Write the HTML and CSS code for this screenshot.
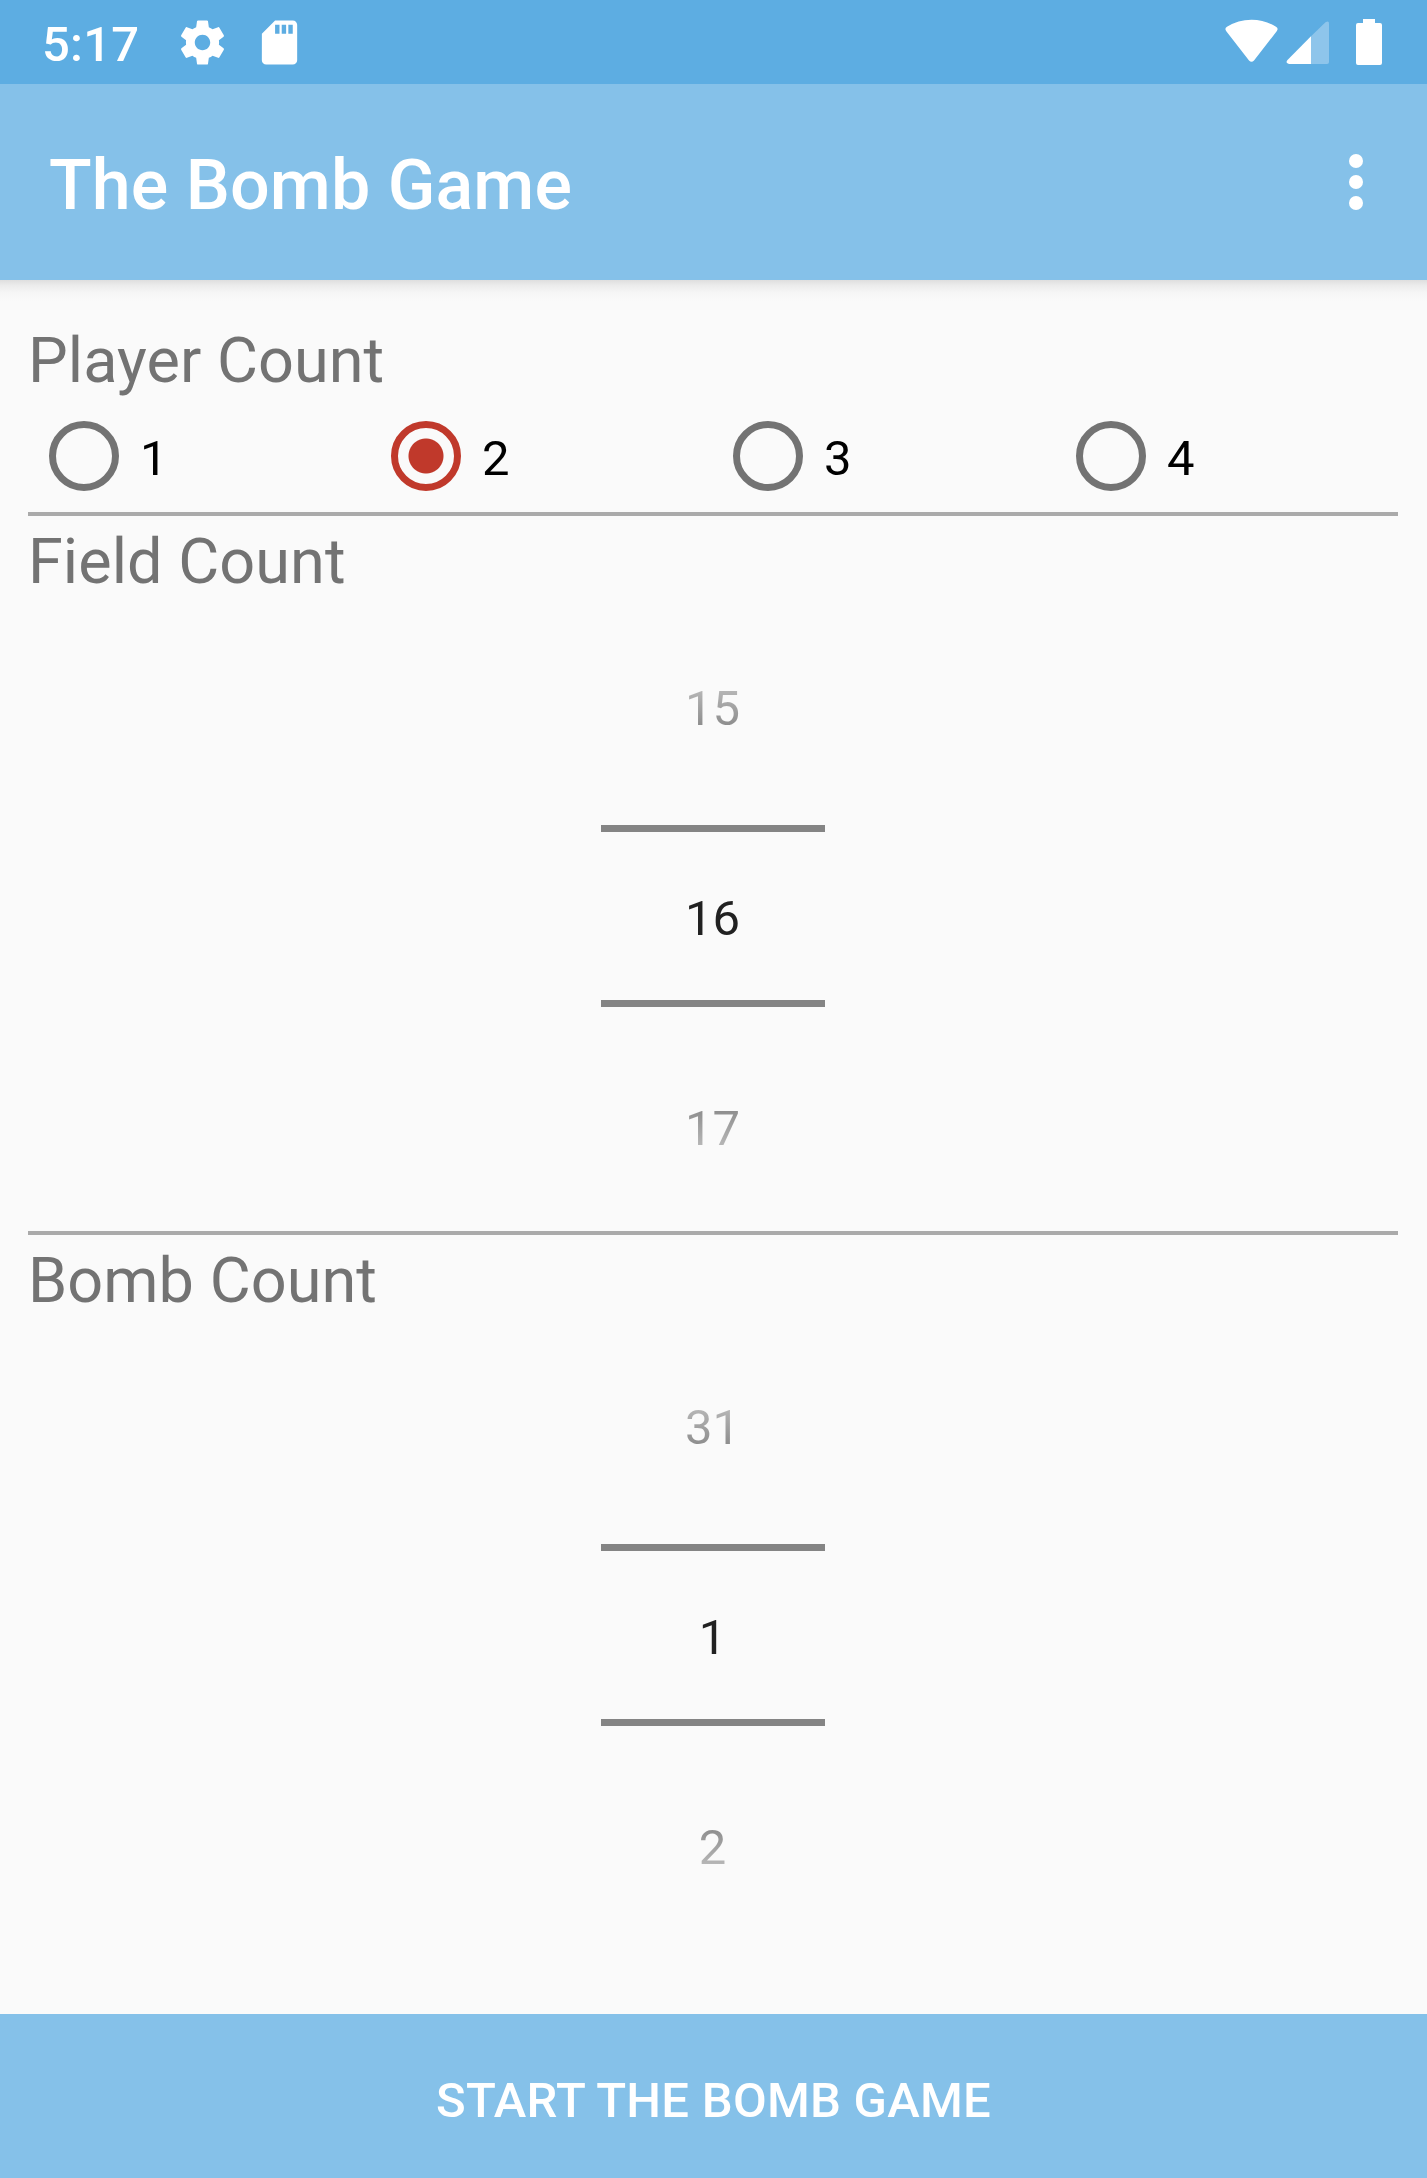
FILE: index.html
```html
<!DOCTYPE html>
<html lang="en">
<head>
<meta charset="utf-8">
<title>The Bomb Game</title>
<link rel="stylesheet" href="styles.css">
</head>
<body>
<div class="status-bar">
  <span class="clock">5:17</span>
  <svg class="gear" viewBox="0 0 24 24"><path d="M19.43 12.98c.04-.32.07-.64.07-.98s-.03-.66-.07-.98l2.11-1.65c.19-.15.24-.42.12-.64l-2-3.46c-.12-.22-.39-.3-.61-.22l-2.49 1c-.52-.4-1.08-.73-1.69-.98l-.38-2.65C14.46 2.18 14.25 2 14 2h-4c-.25 0-.46.18-.49.42l-.38 2.65c-.61.25-1.17.59-1.69.98l-2.49-1c-.23-.09-.49 0-.61.22l-2 3.46c-.13.22-.07.49.12.64l2.11 1.65c-.04.32-.07.65-.07.98s.03.66.07.98l-2.11 1.65c-.19.15-.24.42-.12.64l2 3.46c.12.22.39.3.61.22l2.49-1c.52.4 1.08.73 1.69.98l.38 2.65c.03.24.24.42.49.42h4c.25 0 .46-.18.49-.42l.38-2.65c.61-.25 1.17-.59 1.69-.98l2.49 1c.23.09.49 0 .61-.22l2-3.46c.12-.22.07-.49-.12-.64l-2.11-1.65zM12 15.500c-1.930 0-3.500-1.570-3.500-3.500s1.570-3.500 3.500-3.500 3.500 1.570 3.500 3.500-1.570 3.500-3.500 3.500z"/></svg>
  <svg class="card" viewBox="0 0 24 24"><path d="M18 2h-8L4.020 8 4 20c0 1.100.9 2 2 2h12c1.100 0 2-.9 2-2V4c0-1.100-.9-2-2-2zm-6 6h-2V4h2v4zm3 0h-2V4h2v4zm3 0h-2V4h2v4z"/></svg>
  <svg class="radios-state" viewBox="0 0 158 46">
    <path d="M2.300 12.300Q.2 9.500 3 7.800Q14 .7 27.500.7T52 7.800Q54.800 9.500 52.700 12.300L30 41.500Q27.500 44 25 41.500Z"/>
    <path class="dim" d="M87 17.200L101.500 3.300Q105 1 105 4.500V43Q105 45 103 45H87Z"/>
    <path d="M65 45Q61 44 63.500 41.100L87 17.200V45Z"/>
    <path d="M139 0h12v4h5q2 0 2 2v38q0 2-2 2h-22q-2 0-2-2V6q0-2 2-2h5z"/>
  </svg>
</div>
<header class="app-bar">
  <h1>The Bomb Game</h1>
  <svg class="menu" viewBox="0 0 14 56"><circle cx="7" cy="7" r="7"/><circle cx="7" cy="28" r="7"/><circle cx="7" cy="49" r="7"/></svg>
</header>
<main>
  <section>
    <h2>Player Count</h2>
    <div class="options">
      <div class="option"><span class="ring"></span>1</div>
      <div class="option"><span class="ring selected"></span>2</div>
      <div class="option"><span class="ring"></span>3</div>
      <div class="option"><span class="ring"></span>4</div>
    </div>
  </section>
  <section class="ruled">
    <h2>Field Count</h2>
    <div class="picker">
      <div class="prev"><span>15</span></div>
      <div class="current">16</div>
      <div class="next"><span>17</span></div>
    </div>
  </section>
  <section class="ruled">
    <h2>Bomb Count</h2>
    <div class="picker">
      <div class="prev"><span>31</span></div>
      <div class="current">1</div>
      <div class="next"><span>2</span></div>
    </div>
  </section>
</main>
<button class="start">START THE BOMB GAME</button>
</body>
</html>
```
FILE: styles.css
```css
* {
  box-sizing: border-box;
}

body {
  margin: 0;
  height: 2178px;
  display: flex;
  flex-direction: column;
  overflow: hidden;
  background: #fafafa;
  font-family: Roboto, sans-serif;
  font-size: 49px;
  line-height: 58px;
}

h1, h2 {
  margin: 0;
}

svg {
  display: block;
  fill: #fff;
}

.status-bar {
  flex: none;
  height: 84px;
  display: flex;
  align-items: center;
  padding: 0 45px 0 42px;
  background: #5dade2;
  color: #fff;
  font-weight: 500;
}

.clock {
  width: 134px;
  padding-top: 6px;
  letter-spacing: .2px;
}

.gear, .card {
  width: 53px;
  height: 53px;
}

.card {
  margin-left: 24px;
}

.radios-state {
  width: 158px;
  height: 46px;
  margin-left: auto;
}

.dim {
  opacity: .3;
}

.app-bar {
  flex: none;
  height: 196px;
  display: flex;
  align-items: center;
  justify-content: space-between;
  padding: 0 64px 0 49px;
  background: #85c1e9;
  color: #fff;
}

.app-bar h1 {
  padding-top: 6px;
  font-size: 70px;
  line-height: 82px;
  font-weight: 500;
  letter-spacing: .08px;
}

.menu {
  width: 14px;
  height: 56px;
}

main {
  flex: 1;
  padding: 36px 29px 0 28px;
  background: linear-gradient(#dedede, #ebebeb 5px, #f5f5f5 12px, #fafafa 21px);
}

.ruled {
  border-top: 4px solid #aaa;
}

h2 {
  height: 82px;
  padding-top: 8px;
  font-size: 63px;
  line-height: 74px;
  font-weight: 400;
  letter-spacing: .04px;
  color: #737373;
}

.ruled h2 {
  padding-top: 9px;
}

.options {
  height: 114px;
  display: grid;
  grid-template-columns: 342px 342px 343px 342px;
  padding-top: 2px;
  color: #000;
}

.option {
  display: flex;
  align-items: center;
  gap: 21px;
  padding-left: 21px;
  padding-top: 5px;
}

.ring {
  width: 70px;
  height: 70px;
  margin-top: -5px;
  border: 7px solid #737373;
  border-radius: 50%;
}

.ring.selected {
  border-color: #c0392b;
  background: radial-gradient(circle, #c0392b 17px, transparent 18px);
}

.picker {
  width: 224px;
  height: 633px;
  margin: 0 auto;
  text-align: center;
}

.prev {
  height: 227px;
  padding: 82px 1px 0 0;
}

.current {
  height: 182px;
  padding: 58px 1px 0 0;
  border: solid #848484;
  border-width: 7px 0;
  color: #212121;
}

.next {
  padding: 93px 1px 0 0;
}

.prev span, .next span {
  display: block;
  color: transparent;
  background: linear-gradient(#b5b5b5 11px, #8d8d8d 46px);
  -webkit-background-clip: text;
  background-clip: text;
}

.next span {
  background-image: linear-gradient(#8f8f8f 11px, #b7b7b7 46px);
}

.start {
  flex: none;
  height: 164px;
  padding: 9px 0 0;
  border: 0;
  background: #85c1e9;
  color: #fff;
  font: 500 49px/58px Roboto, sans-serif;
  letter-spacing: .25px;
}
```
